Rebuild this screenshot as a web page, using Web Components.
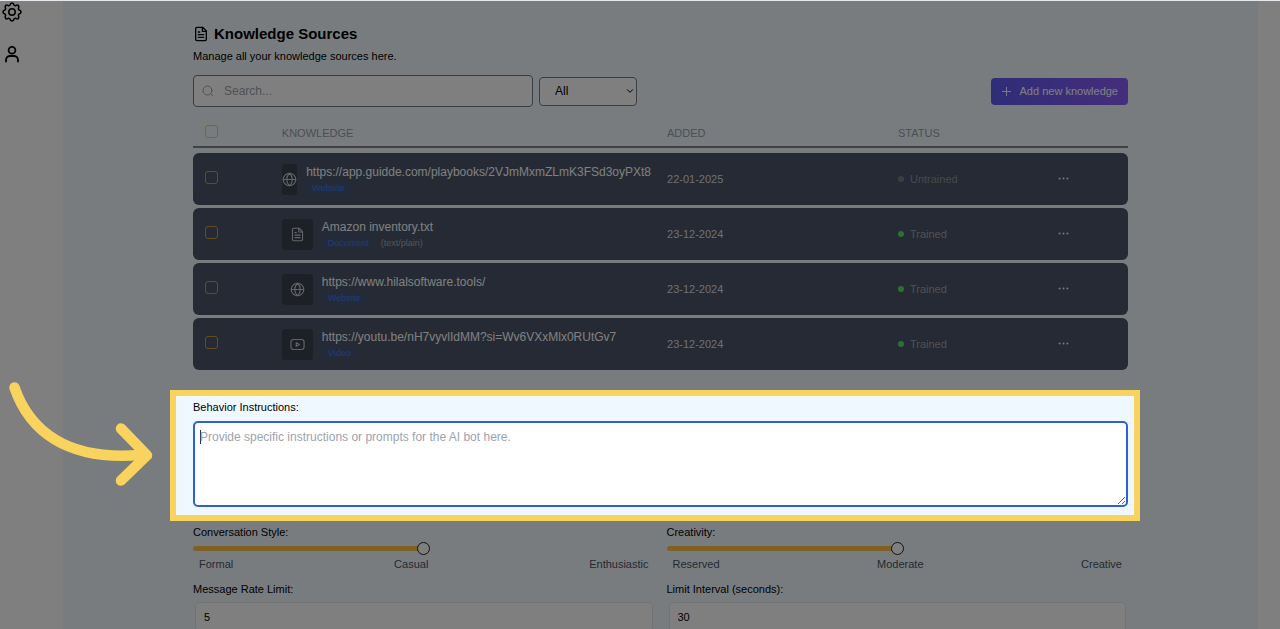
<!DOCTYPE html>
<html lang="en">
<head>
<meta charset="utf-8">
<title>Knowledge Sources</title>
<style>
  html, body {
    height: 100%;
  }

  body {
    margin: 0;
    overflow: hidden;
    background: #fff;
    color: #000;
    font: 11px/16px "Liberation Sans", Arial, Helvetica, sans-serif;
  }
</style>
</head>
<body>
<app-shell>
  <side-rail slot="rail"></side-rail>
  <page-heading icon="file" heading="Knowledge Sources">Manage all your knowledge sources here.</page-heading>
  <knowledge-toolbar></knowledge-toolbar>
  <knowledge-table></knowledge-table>
  <behavior-field label="Behavior Instructions:" placeholder="Provide specific instructions or prompts for the AI bot here."></behavior-field>
  <settings-grid>
    <range-field label="Conversation Style:" value="50" stops="Formal,Casual,Enthusiastic"></range-field>
    <range-field label="Creativity:" value="50" stops="Reserved,Moderate,Creative"></range-field>
    <limit-field label="Message Rate Limit:" value="5"></limit-field>
    <limit-field label="Limit Interval (seconds):" value="30"></limit-field>
  </settings-grid>
</app-shell>
<tour-arrow></tour-arrow>

<script>
const ICONS = {
  cog: `<path d="M10.325 4.317c.426-1.756 2.924-1.756 3.35 0a1.724 1.724 0 002.573 1.066c1.543-.94 3.31.826 2.37 2.37a1.724 1.724 0 001.065 2.572c1.756.426 1.756 2.924 0 3.35a1.724 1.724 0 00-1.066 2.573c.94 1.543-.826 3.31-2.37 2.37a1.724 1.724 0 00-2.572 1.065c-.426 1.756-2.924 1.756-3.35 0a1.724 1.724 0 00-2.573-1.066c-1.543.94-3.31-.826-2.37-2.37a1.724 1.724 0 00-1.065-2.572c-1.756-.426-1.756-2.924 0-3.35a1.724 1.724 0 001.066-2.573c-.94-1.543.826-3.31 2.37-2.37.996.608 2.296.07 2.572-1.065z"/><circle cx="12" cy="12" r="3.2"/>`,
  user: `<circle cx="12" cy="8.3" r="3.4"/><path d="M6 19.5V18a4 4 0 0 1 4-4h4a4 4 0 0 1 4 4v1.5"/>`,
  file: `<path d="M14.5 2H6a2 2 0 0 0-2 2v16a2 2 0 0 0 2 2h12a2 2 0 0 0 2-2V7.500z"/><path d="M14 2v6h6M8 9h2M8 13h8M8 17h8"/>`,
  globe: `<circle cx="12" cy="12" r="10"/><path d="M2 12h20M12 2c-6 5.500-6 14.500 0 20M12 2c6 5.500 6 14.500 0 20"/>`,
  video: `<rect x="1.500" y="4" width="21" height="16" rx="4"/><path d="M10 9v6l5-3z"/>`,
  search: `<circle cx="11" cy="11" r="9"/><path d="m22 22-4.500-4.500"/>`,
  plus: `<path d="M12 3v18M3 12h18"/>`,
  chevron: `<path d="m4 8 8 8 8-8"/>`,
  dots: `<g fill="currentColor" stroke="none"><circle cx="3.500" cy="12" r="2.200"/><circle cx="12" cy="12" r="2.200"/><circle cx="20.500" cy="12" r="2.200"/></g>`,
};

const SOURCES = [
  { title: "https://app.guidde.com/playbooks/2VJmMxmZLmK3FSd3oyPXt8", icon: "globe", type: "Website", added: "22-01-2025", status: "Untrained" },
  { title: "Amazon inventory.txt", icon: "file", type: "Document", note: "(text/plain)", added: "23-12-2024", status: "Trained" },
  { title: "https://www.hilalsoftware.tools/", icon: "globe", type: "Website", added: "23-12-2024", status: "Trained" },
  { title: "https://youtu.be/nH7vyvlIdMM?si=Wv6VXxMlx0RUtGv7", icon: "video", type: "Video", added: "23-12-2024", status: "Trained" },
];

/**
 * Attaches an open shadow root and fills it.
 * @param {HTMLElement} el
 * @param {string} markup
 */
function render(el, markup) {
  const template = document.createElement("template");
  template.innerHTML = markup;
  el.attachShadow({ mode: "open" }).appendChild(template.content.cloneNode(true));
}

/** <ui-icon name="globe" size="14" weight="2"> */
class UiIcon extends HTMLElement {
  connectedCallback() {
    if (this.shadowRoot) return;
    const size = this.getAttribute("size") || 16;
    const weight = this.getAttribute("weight") || 2;
    render(this, `
      <style>
        :host { display: inline-flex; flex: none; }
        svg { display: block; }
      </style>
      <svg width="${size}" height="${size}" viewBox="0 0 24 24" fill="none" stroke="currentColor"
        stroke-width="${weight}" stroke-linecap="round" stroke-linejoin="round" aria-hidden="true">
        ${ICONS[this.getAttribute("name")]}
      </svg>
    `);
  }
}

class AppShell extends HTMLElement {
  constructor() {
    super();
    render(this, `
      <style>
        :host {
          display: flex;
          min-height: 100%;
          position: relative;
        }

        /* window edge, stays above the tour backdrop */
        :host::before {
          content: "";
          position: absolute;
          inset: 0 0 auto;
          height: 1px;
          background: #e4e8ec;
          z-index: 20;
        }

        aside {
          flex: none;
          width: 63px;
        }

        main {
          flex: 1;
          min-width: 0;
          margin-right: 22px;
          padding: 23px 24px 0;
          background: #f0f8ff;
        }

        .column {
          max-width: 935px;
          margin: 0 auto;
        }
      </style>
      <aside><slot name="rail"></slot></aside>
      <main><div class="column"><slot></slot></div></main>
    `);
  }
}

class SideRail extends HTMLElement {
  constructor() {
    super();
    render(this, `
      <style>
        :host { display: block; }

        nav {
          display: flex;
          flex-direction: column;
          align-items: flex-start;
          gap: 14px;
        }

        a {
          display: block;
          color: #000;
        }
      </style>
      <nav>
        <a href="#settings" aria-label="Settings"><ui-icon name="cog" size="24" weight="1.5"></ui-icon></a>
        <a href="#account" aria-label="Account"><ui-icon name="user" size="24" weight="1.8"></ui-icon></a>
      </nav>
    `);
  }
}

class PageHeading extends HTMLElement {
  constructor() {
    super();
    render(this, `
      <style>
        :host { display: block; }

        h1 {
          display: flex;
          align-items: center;
          gap: 5px;
          margin: 0 0 3px;
          font-size: 15px;
          line-height: 22px;
        }

        p { margin: 0; }
      </style>
      <h1><ui-icon name="${this.getAttribute("icon")}" size="16"></ui-icon>${this.getAttribute("heading")}</h1>
      <p><slot></slot></p>
    `);
  }
}

class KnowledgeToolbar extends HTMLElement {
  constructor() {
    super();
    render(this, `
      <style>
        :host {
          display: flex;
          align-items: center;
          gap: 6px;
          margin-top: 11px;
        }

        .search, .filter {
          display: grid;
          align-items: center;
        }

        .search > *, .filter > * { grid-area: 1 / 1; }

        .search {
          flex: 0 1 340px;
          color: #9ca3af;
        }

        .search ui-icon {
          margin-left: 9px;
          z-index: 1;
        }

        input, select {
          box-sizing: border-box;
          width: 100%;
          border: 1px solid #747a84;
          border-radius: 4px;
          background: #fff;
          color: #000;
          font: inherit;
          font-size: 12px;
        }

        input {
          height: 32px;
          padding: 0 12px 0 30px;
        }

        input::placeholder {
          color: #9ca3af;
          opacity: 1;
        }

        .filter { flex: 0 0 98px; }

        .filter ui-icon {
          justify-self: end;
          margin-right: 3px;
          pointer-events: none;
        }

        select {
          appearance: none;
          height: 29px;
          padding: 0 15px;
        }

        button {
          display: flex;
          align-items: center;
          gap: 8px;
          height: 27px;
          margin-left: auto;
          padding: 0 10px;
          border: 0;
          border-radius: 4px;
          background: linear-gradient(to right, #605af0, #8b5cf6);
          color: #fff;
          font: inherit;
          white-space: nowrap;
        }
      </style>
      <div class="search">
        <ui-icon name="search" size="12"></ui-icon>
        <input type="search" placeholder="Search..." aria-label="Search">
      </div>
      <div class="filter">
        <select aria-label="Type">
          <option>All</option>
          <option>Website</option>
          <option>Document</option>
          <option>Video</option>
        </select>
        <ui-icon name="chevron" size="8" weight="3"></ui-icon>
      </div>
      <button type="button"><ui-icon name="plus" size="11"></ui-icon>Add new knowledge</button>
    `);
  }
}

class KnowledgeTable extends HTMLElement {
  constructor() {
    super();
    render(this, `
      <style>
        :host { display: block; }

        table {
          width: 100%;
          table-layout: fixed;
          border-collapse: separate;
          border-spacing: 0 3px;
        }

        .c-check { width: 9.500%; }
        .c-name { width: 41.200%; }
        .c-added { width: 24.700%; }
        .c-status { width: 17.100%; }

        th, td {
          padding: 0;
          text-align: left;
          font-weight: normal;
        }

        /* the header rule sits 2px above the cell edge */
        th {
          height: 40px;
          box-sizing: border-box;
          padding: 6px 0 0;
          color: #999da4;
          background: linear-gradient(#80848c, #80848c) no-repeat 0 calc(100% - 2px) / 100% 2px;
        }

        td {
          height: 52px;
          background: #4a5568;
          color: #dcdfe4;
        }

        td:first-child { border-radius: 6px 0 0 6px; }
        td:last-child { border-radius: 0 6px 6px 0; }

        input {
          appearance: none;
          display: block;
          box-sizing: border-box;
          width: 13px;
          height: 13px;
          margin: 0 0 3px 12px;
          border: 1px solid #cc9c34;
          border-radius: 3px;
        }

        th input { border-color: #ffcc5c; }

        .source {
          display: flex;
          align-items: center;
          gap: 9px;
          padding-right: 16px;
        }

        .tile {
          display: flex;
          align-items: center;
          justify-content: center;
          flex: 0 1 31px;
          min-width: 15px;
          height: 31px;
          border-radius: 3px;
          background: #3a414d;
          color: #c4c8ce;
        }

        .info {
          flex: none;
          white-space: nowrap;
        }

        .title {
          color: #fff;
          font-size: 12px;
          line-height: 16px;
        }

        .meta {
          display: flex;
          align-items: center;
          gap: 6px;
          font-size: 9px;
          line-height: 14px;
          margin-top: 1px;
          color: #a8abb0;
        }

        .badge {
          padding: 0 6px;
          border-radius: 3px;
          background: #475674;
          color: #3f78ec;
        }

        .status {
          display: flex;
          align-items: center;
          gap: 6px;
          color: #a0a3a8;
        }

        .status::before {
          content: "";
          width: 6px;
          height: 6px;
          border-radius: 50%;
          background: #5fdc68;
        }

        .untrained { color: #8e9299; }
        .untrained::before { background: #777b82; }

        button {
          display: block;
          padding: 0;
          border: 0;
          background: none;
          color: #f0f0f0;
        }
      </style>
      <table>
        <colgroup><col class="c-check"><col class="c-name"><col class="c-added"><col class="c-status"><col></colgroup>
        <thead>
          <tr>
            <th><input type="checkbox" aria-label="Select all"></th>
            <th scope="col">KNOWLEDGE</th>
            <th scope="col">ADDED</th>
            <th scope="col">STATUS</th>
            <th></th>
          </tr>
        </thead>
        <tbody>${SOURCES.map(sourceRow).join("")}</tbody>
      </table>
    `);
  }
}

function sourceRow({ title, icon, type, note, added, status }) {
  return `
    <tr>
      <td><input type="checkbox" aria-label="Select ${title}"></td>
      <td>
        <div class="source">
          <div class="tile"><ui-icon name="${icon}" size="15" weight="1.8"></ui-icon></div>
          <div class="info">
            <div class="title">${title}</div>
            <div class="meta"><span class="badge">${type}</span>${note ? `<span>${note}</span>` : ""}</div>
          </div>
        </div>
      </td>
      <td>${added}</td>
      <td><div class="status ${status.toLowerCase()}">${status}</div></td>
      <td><button type="button" aria-label="More"><ui-icon name="dots" size="11"></ui-icon></button></td>
    </tr>`;
}

class BehaviorField extends HTMLElement {
  constructor() {
    super();
    render(this, `
      <style>
        :host {
          display: flex;
          flex-direction: column;
          gap: 6px;
          position: relative;
          margin-top: 26px;
        }

        /* tour spotlight: the frame and the backdrop around it */
        :host::after {
          content: "";
          position: absolute;
          inset: -9px -12px -14px -23px;
          border: 6px solid #f8d35e;
          box-shadow: 0 0 0 2000px rgba(0, 0, 0, 0.5);
          pointer-events: none;
          z-index: 10;
        }

        /* the gradient is a steady caret, the native one blinks */
        textarea {
          box-sizing: border-box;
          width: 100%;
          height: 86px;
          padding: 6px 5px;
          border: 2px solid #2e62cc;
          border-radius: 5px;
          outline: none;
          background: #fff linear-gradient(#333, #333) no-repeat 5px 7px / 1px 14px;
          color: #000;
          caret-color: transparent;
          font: inherit;
          font-size: 12px;
          resize: vertical;
        }

        textarea:not(:placeholder-shown) {
          background-image: none;
          caret-color: auto;
        }

        textarea::placeholder {
          color: #9ca3af;
          opacity: 1;
        }
      </style>
      <label for="text">${this.getAttribute("label")}</label>
      <textarea id="text" placeholder="${this.getAttribute("placeholder")}"></textarea>
    `);
  }

  connectedCallback() {
    this.shadowRoot.querySelector("textarea").focus();
  }
}

class SettingsGrid extends HTMLElement {
  constructor() {
    super();
    render(this, `
      <style>
        :host {
          display: grid;
          grid-template-columns: 1fr 1fr;
          gap: 9px 12px;
          margin-top: 17px;
        }
      </style>
      <slot></slot>
    `);
  }
}

class RangeField extends HTMLElement {
  constructor() {
    super();
    const stops = this.getAttribute("stops").split(",");
    render(this, `
      <style>
        :host {
          display: flex;
          flex-direction: column;
          gap: 2px;
        }

        input {
          appearance: none;
          width: 100%;
          height: 12px;
          margin: 0;
          background: none;
        }

        input::-webkit-slider-runnable-track {
          height: 5px;
          border-radius: 3px;
          background: linear-gradient(to right, #ffc24c var(--fill), transparent var(--fill));
        }

        input::-webkit-slider-thumb {
          appearance: none;
          box-sizing: border-box;
          width: 13px;
          height: 13px;
          margin-top: -4px;
          border: 1px solid #222;
          border-radius: 50%;
          background: #fff;
        }

        .stops {
          display: flex;
          justify-content: space-between;
          padding: 0 6px;
          color: #4b5563;
        }
      </style>
      <label for="range">${this.getAttribute("label")}</label>
      <input id="range" type="range" min="0" max="100" value="${this.getAttribute("value")}">
      <div class="stops">${stops.map((s) => `<span>${s}</span>`).join("")}</div>
    `);

    const input = this.shadowRoot.querySelector("input");
    const update = () => input.style.setProperty("--fill", input.value + "%");
    input.addEventListener("input", update, { passive: true });
    update();
  }
}

class LimitField extends HTMLElement {
  constructor() {
    super();
    render(this, `
      <style>
        :host {
          display: flex;
          flex-direction: column;
          gap: 5px;
        }

        input {
          box-sizing: border-box;
          height: 30px;
          margin: 0 2px;
          padding: 0 8px;
          border: 1px solid #e5e7eb;
          border-radius: 4px;
          background: #fff;
          color: #000;
          font: inherit;
        }
      </style>
      <label for="limit">${this.getAttribute("label")}</label>
      <input id="limit" type="text" inputmode="numeric" value="${this.getAttribute("value")}">
    `);
  }
}

class TourArrow extends HTMLElement {
  constructor() {
    super();
    render(this, `
      <style>
        :host {
          display: block;
          position: absolute;
          left: 0;
          top: 376px;
          z-index: 11;
          pointer-events: none;
        }

        svg { display: block; }
      </style>
      <svg width="160" height="116" viewBox="0 376 160 116" fill="none" stroke="#f8d35e"
        stroke-width="10.500" stroke-linecap="round" stroke-linejoin="round" aria-hidden="true">
        <path d="M14.500 387.500C29 430 66 461 140 455"/>
        <path d="M121 428.500 147 455.300 121 480.500"/>
      </svg>
    `);
  }
}

customElements.define("ui-icon", UiIcon);
customElements.define("app-shell", AppShell);
customElements.define("side-rail", SideRail);
customElements.define("page-heading", PageHeading);
customElements.define("knowledge-toolbar", KnowledgeToolbar);
customElements.define("knowledge-table", KnowledgeTable);
customElements.define("behavior-field", BehaviorField);
customElements.define("settings-grid", SettingsGrid);
customElements.define("range-field", RangeField);
customElements.define("limit-field", LimitField);
customElements.define("tour-arrow", TourArrow);
</script>
</body>
</html>
